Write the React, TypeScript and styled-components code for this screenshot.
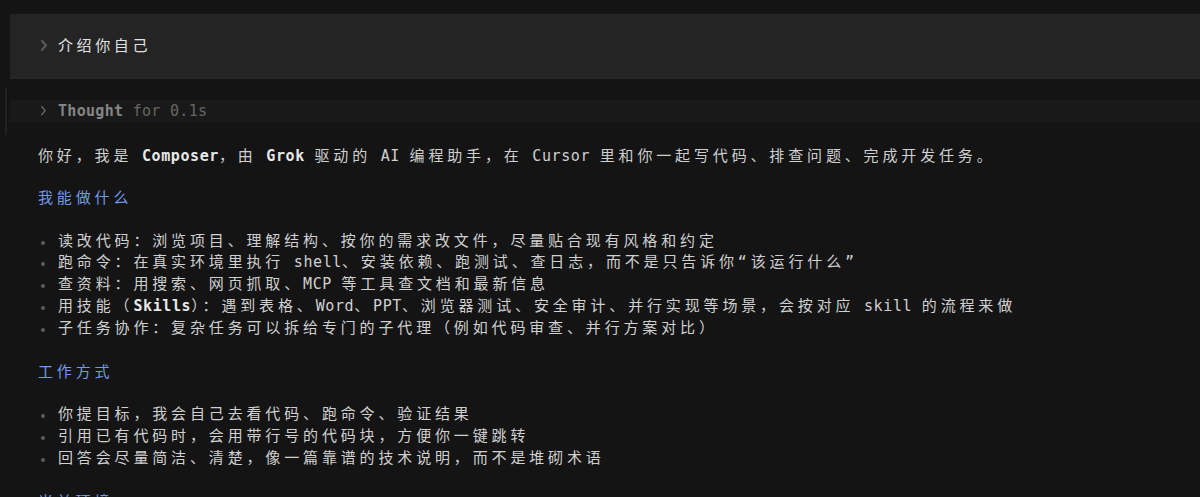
import React from "react";
import styled, { createGlobalStyle } from "styled-components";

const GlobalStyle = createGlobalStyle`
  html, body {
    margin: 0;
    padding: 0;
    background: #141414;
  }
  body {
    font-family: "DejaVu Sans Mono", "Noto Sans CJK SC", monospace;
    font-size: 15px;
    color: #d0d0d0;
    -webkit-font-smoothing: antialiased;
  }
`;

// ascii runs get tight mono spacing, CJK keeps the wide grid spacing
const Rich = ({ text }: { text: string }) => (
  <>
    {text.split(/(\*\*[^*]+\*\*)/).map((chunk, i) => {
      if (chunk.startsWith("**")) {
        return (
          <Strong key={i}>
            <Rich text={chunk.slice(2, -2)} />
          </Strong>
        );
      }
      return chunk
        .split(/([\x20-\x7e]+)/)
        .map((part, j) =>
          /^[\x20-\x7e]+$/.test(part) ? (
            <Latin key={`${i}-${j}`}>{part}</Latin>
          ) : (
            <React.Fragment key={`${i}-${j}`}>{part}</React.Fragment>
          )
        );
    })}
  </>
);

const Chevron = ({
  size = 8,
  color = "#6b6b6b",
  weight = 1.6,
}: {
  size?: number;
  color?: string;
  weight?: number;
}) => (
  <svg width={size} height={size * 1.6} viewBox="0 0 8 13" fill="none">
    <path d="M2 2 L6 6.5 L2 11" stroke={color} strokeWidth={weight} strokeLinecap="round" strokeLinejoin="round" />
  </svg>
);

const sections = [
  {
    title: "我能做什么",
    items: [
      "读改代码：浏览项目、理解结构、按你的需求改文件，尽量贴合现有风格和约定",
      "跑命令：在真实环境里执行 shell、安装依赖、跑测试、查日志，而不是只告诉你“该运行什么”",
      "查资料：用搜索、网页抓取、MCP 等工具查文档和最新信息",
      "用技能（**Skills**）：遇到表格、Word、PPT、浏览器测试、安全审计、并行实现等场景，会按对应 skill 的流程来做",
      "子任务协作：复杂任务可以拆给专门的子代理（例如代码审查、并行方案对比）",
    ],
  },
  {
    title: "工作方式",
    items: [
      "你提目标，我会自己去看代码、跑命令、验证结果",
      "引用已有代码时，会用带行号的代码块，方便你一键跳转",
      "回答会尽量简洁、清楚，像一篇靠谱的技术说明，而不是堆砌术语",
    ],
  },
  {
    title: "当前环境",
    items: [],
  },
];

export default function App() {
  return (
    <>
      <GlobalStyle />
      <Page>
        <UserBubble>
          <CaretSlot>
            <Chevron size={8} color="#5a5a5a" weight={2.2} />
          </CaretSlot>
          <UserText>
            <Rich text="介绍你自己" />
          </UserText>
        </UserBubble>

        <ThoughtBlock>
          <ThoughtRow>
            <CaretSlot>
              <Chevron size={7} color="#6a6a6a" />
            </CaretSlot>
            <ThoughtLabel>Thought</ThoughtLabel>
            <ThoughtTime> for 0.1s</ThoughtTime>
          </ThoughtRow>
        </ThoughtBlock>

        <Answer>
          <Para>
            <Rich text="你好，我是 **Composer**，由 **Grok** 驱动的 AI 编程助手，在 Cursor 里和你一起写代码、排查问题、完成开发任务。" />
          </Para>
          {sections.map((section) => (
            <React.Fragment key={section.title}>
              <Heading>
                <Rich text={section.title} />
              </Heading>
              {section.items.length > 0 && (
                <List>
                  {section.items.map((item) => (
                    <Item key={item}>
                      <Rich text={item} />
                    </Item>
                  ))}
                </List>
              )}
            </React.Fragment>
          ))}
        </Answer>
      </Page>
    </>
  );
}

const Page = styled.div`
  height: 497px;
  overflow: hidden;
  padding-top: 14px;
  box-sizing: border-box;
`;

const Latin = styled.span`
  letter-spacing: 0.6px;
`;

const Strong = styled.span`
  font-weight: 700;
  color: #e8e8e8;
`;

const UserBubble = styled.div`
  margin-left: 10px;
  height: 65px;
  box-sizing: border-box;
  background: #242424;
  border-bottom: 2px solid #272727;
  display: flex;
  align-items: center;
  padding-left: 30px;
`;

const CaretSlot = styled.span`
  width: 18px;
  display: inline-flex;
  align-items: center;
`;

const UserText = styled.span`
  color: #e2e2e2;
  letter-spacing: 3.6px;
  line-height: 22px;
`;

const ThoughtBlock = styled.div`
  margin-top: 9px;
  margin-left: 5px;
  border-left: 2px solid #222222;
  padding: 12px 0 13px 3px;
`;

const ThoughtRow = styled.div`
  background: #191919;
  height: 22px;
  display: flex;
  align-items: center;
  padding-left: 30px;
  white-space: pre;
`;

const ThoughtLabel = styled.span`
  font-weight: 700;
  color: #858585;
  letter-spacing: 0.3px;
`;

const ThoughtTime = styled.span`
  color: #666666;
  letter-spacing: 0.3px;
`;

const Answer = styled.div`
  padding: 11px 20px 0 38px;
  letter-spacing: 3.85px;
  line-height: 21.75px;
`;

const Para = styled.p`
  margin: 0;
  white-space: nowrap;
`;

const Heading = styled.div`
  margin: 20.5px 0;
  color: #6f9be4;
`;

const List = styled.ul`
  margin: 0 0 22.5px;
  padding: 0;
  list-style: none;
`;

const Item = styled.li`
  position: relative;
  padding-left: 20px;
  white-space: nowrap;

  &::before {
    content: "";
    position: absolute;
    left: 3px;
    top: 10px;
    width: 4px;
    height: 4px;
    border-radius: 50%;
    background: #5c5c5c;
  }
`;
